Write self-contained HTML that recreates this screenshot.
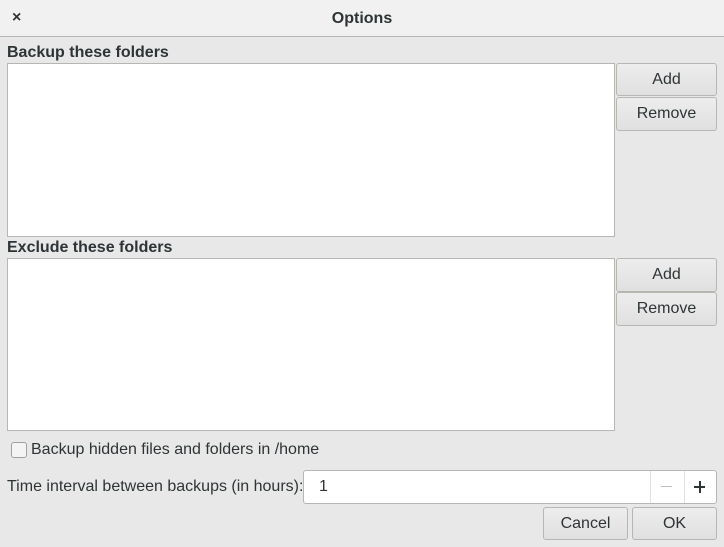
<html><head><style>
body{margin:0;width:724px;height:547px;background:#e8e8e8;font-family:"Liberation Sans",sans-serif;font-size:15px;color:#2e3436;position:relative;overflow:hidden}
.a{position:absolute}
.title{left:0;top:0;width:724px;height:36px;background:#f1f1f1;border-bottom:1px solid #b6b6b3}
.lbl{font-weight:bold;font-size:16px}
.list{background:#fff;border:1px solid #b6b6b3;box-sizing:border-box}
.btn{box-sizing:border-box;border:1px solid #b6b6b3;border-radius:3px;background:linear-gradient(#ededed,#e0e0e0);text-align:center;line-height:31px;font-size:16px}
</style></head><body>
<div class="a title"></div>
<div class="a" style="left:12px;top:9px;font-size:16px;font-weight:bold">×</div>
<div class="a" style="left:0;width:724px;top:10px;text-align:center;font-weight:bold;font-size:16px">Options</div>
<div class="a lbl" style="left:7px;top:44px">Backup these folders</div>
<div class="a list" style="left:7px;top:63px;width:608px;height:174px"></div>
<div class="a btn" style="left:616px;top:63px;width:101px;height:33px">Add</div>
<div class="a btn" style="left:616px;top:97px;width:101px;height:34px">Remove</div>
<div class="a lbl" style="left:7px;top:239px">Exclude these folders</div>
<div class="a list" style="left:7px;top:258px;width:608px;height:173px"></div>
<div class="a btn" style="left:616px;top:258px;width:101px;height:34px">Add</div>
<div class="a btn" style="left:616px;top:292px;width:101px;height:34px">Remove</div>
<div class="a" style="left:11px;top:442px;width:14px;height:14px;border:1px solid #a0a0a0;border-radius:3px;background:#f4f4f4"></div>
<div class="a" style="left:31px;top:441px;font-size:16px">Backup hidden files and folders in /home</div>
<div class="a" style="left:7px;top:478px;font-size:16px">Time interval between backups (in hours):</div>
<div class="a list" style="left:303px;top:470px;width:414px;height:34px;border-radius:3px"></div>
<div class="a" style="left:319px;top:478px;font-size:16px">1</div>
<div class="a" style="left:650px;top:471px;width:1px;height:32px;background:#e0e0e0"></div>
<div class="a" style="left:684px;top:471px;width:1px;height:32px;background:#e0e0e0"></div>
<div class="a" style="left:661px;top:486px;width:11px;height:1px;background:#c0c0c0"></div>
<div class="a" style="left:694px;top:486px;width:11px;height:2px;background:#2e3436"></div>
<div class="a" style="left:699px;top:481px;width:2px;height:12px;background:#2e3436"></div>
<div class="a btn" style="left:543px;top:507px;width:85px;height:33px">Cancel</div>
<div class="a btn" style="left:632px;top:507px;width:85px;height:33px">OK</div>
</body></html>
